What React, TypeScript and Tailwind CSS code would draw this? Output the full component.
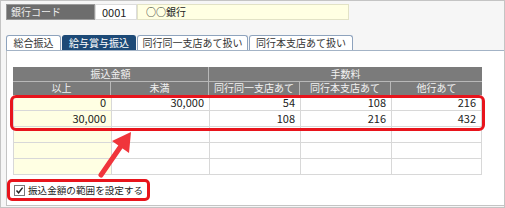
import React from 'react';

const font = "font-['Noto_Sans_CJK_JP','Noto_Sans',sans-serif]";

const tabs = [
  { label: '総合振込', w: 'w-[55px]', active: false },
  { label: '給与賞与振込', w: 'w-[74px]', active: true },
  { label: '同行同一支店あて扱い', w: 'w-[111px]', active: false },
  { label: '同行本支店あて扱い', w: 'w-[104px]', active: false },
];

const rows: string[][] = [
  ['0', '30,000', '54', '108', '216'],
  ['30,000', '', '108', '216', '432'],
  ['', '', '', '', ''],
  ['', '', '', '', ''],
  ['', '', '', '', ''],
];

const cols = 'grid grid-cols-[98px_98px_91px_91px_91px]';

const App: React.FC = () => {
  return (
    <div className={`relative w-[505px] h-[208px] border border-[#c4c4c4] bg-[#f6f6f6] overflow-hidden ${font}`}>
      {/* bank code row */}
      <div className="mt-[3px] ml-[5px] flex h-[16px]">
        <div className="w-[89px] bg-[#6d6d6d] border border-[#9a9a9a] text-[#ececec] text-[10px] leading-[14px] pl-[4px]">
          銀行コード
        </div>
        <div className="w-[42px] bg-white border border-[#dcdcdc] text-[#222] text-[11px] leading-[14px] pl-[6px]">
          0001
        </div>
        <div className="w-[212px] bg-[#ffffe3] border border-[#e2e2c6] text-[#222] text-[10px] leading-[14px] pl-[8px]">
          ○○銀行
        </div>
      </div>

      {/* tabs */}
      <div className="mt-[15px] ml-[5px] flex gap-[1px] items-end border-b border-[#a3b3c6] h-[16px]">
        {tabs.map(t => (
          <div
            key={t.label}
            className={`${t.w} h-[15px] rounded-t-[3px] border border-b-0 text-[10px] leading-[14px] text-center whitespace-nowrap ${
              t.active ? 'bg-[#1d4a77] border-[#1d4a77] text-white' : 'bg-white border-[#8ea3bd] text-[#333]'
            }`}
          >
            {t.label}
          </div>
        ))}
      </div>

      {/* panel */}
      <div className="ml-[5px] h-[155px] bg-white border-l border-b border-[#c4c4c4] pl-[6px] pt-[16px]">
        <div className="w-[469px]">
          <div className="grid grid-cols-[196px_273px] h-[14px] bg-[#7b7b7b] text-[#f2f2f2] text-[10px] leading-[14px] text-center overflow-hidden">
            <div className="border-r border-[#b8b8b8]">振込金額</div>
            <div>手数料</div>
          </div>
          <div className={`${cols} h-[14px] bg-[#7b7b7b] text-[#f2f2f2] text-[10px] leading-[12px] text-center border-t border-[#b8b8b8] overflow-hidden`}>
            <div className="border-r border-[#b8b8b8]">以上</div>
            <div className="border-r border-[#b8b8b8]">未満</div>
            <div className="border-r border-[#b8b8b8]">同行同一支店あて</div>
            <div className="border-r border-[#b8b8b8]">同行本支店あて</div>
            <div>他行あて</div>
          </div>
          {rows.map((r, i) => (
            <div key={i} className={`${cols} h-[16px] border-b border-[#d8d8d8] text-[11px] leading-[15px] text-[#222]`}>
              {r.map((c, j) => (
                <div
                  key={j}
                  className={`text-right pr-[5px] border-l border-[#d8d8d8] ${j === 4 ? 'border-r' : ''} ${
                    j === 0 ? 'bg-[#ffffe3]' : 'bg-white'
                  }`}
                >
                  {c}
                </div>
              ))}
            </div>
          ))}
        </div>

        {/* checkbox */}
        <div className="mt-[4px] -ml-[6px] w-[143px] h-[22px] border-[3px] border-[#e8141c] rounded-[5px] flex items-center pl-[4px] gap-[3px] whitespace-nowrap">
          <span className="shrink-0 w-[11px] h-[11px] border border-[#7a7a7a] bg-white flex items-center justify-center">
            <svg width="9" height="9" viewBox="0 0 9 9">
              <path d="M1.5 4.5 L3.6 6.8 L7.6 1.6" fill="none" stroke="#222" strokeWidth="1.4" />
            </svg>
          </span>
          <span className="text-[9.6px] leading-[14px] text-[#222]">振込金額の範囲を設定する</span>
        </div>
      </div>

      {/* highlight box */}
      <div className="absolute left-[9px] top-[94px] w-[475px] h-[36px] border-[3px] border-[#e8141c] rounded-[6px]" />

      {/* arrow */}
      <svg className="absolute left-[-1px] top-[-1px] pointer-events-none" width="505" height="208" viewBox="0 0 505 208">
        <line x1="101" y1="175" x2="121" y2="146" stroke="#f0353b" strokeWidth="5" strokeLinecap="round" />
        <polygon points="131,132 129,153 112,141" fill="#f0353b" />
      </svg>
    </div>
  );
};

export default App;
